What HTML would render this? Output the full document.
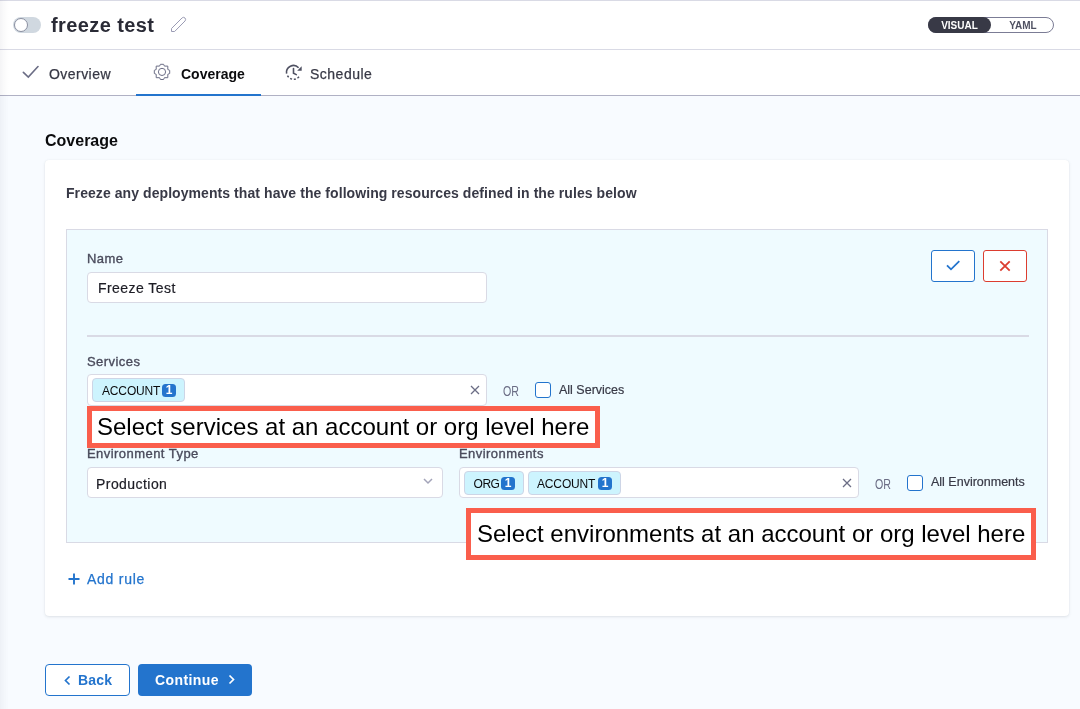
<!DOCTYPE html>
<html><head><meta charset="utf-8">
<style>
*{box-sizing:border-box;margin:0;padding:0}
html,body{width:1080px;height:709px;overflow:hidden;background:#f8fbff;font-family:"Liberation Sans",sans-serif;color:#22222a}
.abs{position:absolute}
#top{position:absolute;left:0;top:0;width:1080px;height:96px;background:#fff}
#topline{position:absolute;left:0;top:0;width:1080px;height:1px;background:#d9dae5}
#hdrline{position:absolute;left:0;top:49px;width:1080px;height:1px;background:#d9dae5}
#tabline{position:absolute;left:0;top:95px;width:1080px;height:1px;background:#b0b1c4}
#leftshade{position:absolute;left:0;top:0;width:10px;height:709px;background:linear-gradient(to right,rgba(0,0,40,0.045) 0,rgba(0,0,40,0.025) 3px,rgba(0,0,40,0) 9px)}
.toggle{position:absolute;left:13px;top:17px;width:28px;height:16px;border-radius:8px;background:#d0d8e0}
.toggle .knob{position:absolute;left:1px;top:1px;width:14px;height:14px;border-radius:50%;background:#fff;border:1px solid #8a8fa0}
.title{position:absolute;left:51px;top:13px;font-size:20px;font-weight:bold;color:#2a2b36;line-height:24px;letter-spacing:0.4px}
.vy{position:absolute;left:928px;top:17px;width:126px;height:16px;border:1px solid #7b7c95;border-radius:8px;background:#fff}
.vy .v{position:absolute;left:-1px;top:-1px;width:63px;height:16px;border-radius:8px;background:#383946;color:#fff;font-size:10px;font-weight:bold;text-align:center;line-height:18px}
.vy .y{position:absolute;left:62px;top:-1px;width:64px;height:16px;color:#4f5162;font-size:10px;font-weight:bold;text-align:center;line-height:18px}
.tab{position:absolute;top:65px;font-size:14px;line-height:18px;color:#383946;-webkit-text-stroke:0.25px #383946}
.underline{position:absolute;left:136px;top:94px;width:125px;height:2px;background:#2374cd}
.h2{position:absolute;left:45px;top:131px;font-size:16px;font-weight:bold;line-height:20px;color:#0b0b0d}
#card{position:absolute;left:45px;top:160px;width:1024px;height:456px;background:#fff;border-radius:4px;box-shadow:0 0 1px rgba(40,41,61,0.08),0 1px 3px rgba(96,97,112,0.16)}
.desc{position:absolute;left:66px;top:184px;font-size:14px;font-weight:bold;line-height:18px;color:#383946;letter-spacing:0.07px}
#panel{position:absolute;left:66px;top:229px;width:982px;height:314px;background:#effbff;border:1px solid #d9dae5}
.lbl{position:absolute;font-size:13px;line-height:16px;color:#4a4b5c;letter-spacing:0.45px;-webkit-text-stroke:0.35px #4a4b5c}
.inp{position:absolute;background:#fff;border:1px solid #d9dae5;border-radius:4px;height:31px}
.txt{position:absolute;font-size:14px;line-height:18px;color:#1d1d25;letter-spacing:0.44px;-webkit-text-stroke:0.2px #1d1d25}
.ibtn{position:absolute;top:250px;width:44px;height:32px;background:#fff;border-radius:3px}
.divider{position:absolute;left:87px;top:335px;width:942px;height:2px;background:#d9dae5}
.tag{position:absolute;height:24px;background:#cdf4fe;border:1px solid #cdd5e6;border-radius:4px;font-size:12px;line-height:24px;color:#0b0b0d}
.badge{display:inline-block;position:absolute;top:5px;width:14px;height:13px;background:#2374cd;color:#fff;border-radius:3.5px;font-size:12px;font-weight:bold;line-height:13px;text-align:center}
.or{position:absolute;font-size:14px;color:#6b6d85;line-height:16px;transform:scaleX(0.76);transform-origin:left}
.cb{position:absolute;width:16px;height:16px;border:1.5px solid #2374cd;border-radius:3px;background:#fff}
.red{position:absolute;border:5px solid #fa5e4c;background:#fff;color:#000;font-size:24px;line-height:28px;white-space:nowrap}
.addrule{position:absolute;left:67px;top:570px;font-size:14px;line-height:18px;color:#2374cd;letter-spacing:0.75px;-webkit-text-stroke:0.25px #2374cd}
.btn{position:absolute;top:664px;height:32px;border-radius:4px;font-size:14px;font-weight:bold;line-height:30px}
</style></head><body><div id="root" style="position:absolute;left:0;top:0;width:1080px;height:709px;will-change:transform">
<div id="top"></div>
<div id="topline"></div>
<div id="hdrline"></div>
<div id="tabline"></div>
<div class="toggle"><div class="knob"></div></div>
<div class="title">freeze test</div>
<svg class="abs" style="left:170px;top:16px" width="17" height="17" viewBox="0 0 17 17"><path d="M1.5 15.5 L1.5 12.5 L12.2 1.8 Q13.6 0.7 15 2 Q16.2 3.4 15.1 4.9 L4.6 15.5 Z" fill="none" stroke="#9a9bb4" stroke-width="1"/></svg>
<div class="vy"><div class="v">VISUAL</div><div class="y">YAML</div></div>

<svg class="abs" style="left:22px;top:65px" width="17" height="14" viewBox="0 0 17 14"><path d="M1.4 7.4 L6.3 12 L16 1.5" fill="none" stroke="#6b6d85" stroke-width="1.6" stroke-linecap="round"/></svg>
<div class="tab" style="left:49px;letter-spacing:0.45px">Overview</div>
<svg class="abs" style="left:153px;top:63px" width="18" height="18" viewBox="0 0 18 18"><circle cx="9" cy="8.9" r="3.6" fill="none" stroke="#6b6d85" stroke-width="1"/><path d="M7.4 1.3 H10.6 L11.4 3.1 H14.8 V6.5 L16.7 7.3 V10.5 L14.8 11.3 V14.7 H11.4 L10.6 16.5 H7.4 L6.6 14.7 H3.2 V11.3 L1.3 10.5 V7.3 L3.2 6.5 V3.1 H6.6 Z" fill="none" stroke="#6b6d85" stroke-width="1" stroke-linejoin="round"/></svg>
<div class="tab" style="left:181px;font-weight:bold;color:#0b0b0d;-webkit-text-stroke:0">Coverage</div>
<svg class="abs" style="left:284px;top:62px" width="20" height="20" viewBox="0 0 20 20"><path d="M2.6 11.7 A7 7 0 0 1 14.6 5.7" fill="none" stroke="#4f5162" stroke-width="1.6"/><path d="M17.7 4.2 L17.7 8.7 L13.2 8.7 Z" fill="#4f5162"/><path d="M3.5 13.6 A7 7 0 0 0 16 13.2" fill="none" stroke="#4f5162" stroke-width="1.5" stroke-dasharray="2 1.8"/><path d="M9.5 6.5 V11.2 L12.3 12.6" fill="none" stroke="#4f5162" stroke-width="1.6" stroke-linecap="round"/></svg>
<div class="tab" style="left:310px;letter-spacing:0.5px">Schedule</div>
<div class="underline"></div>

<div class="h2">Coverage</div>
<div id="card"></div>
<div class="desc">Freeze any deployments that have the following resources defined in the rules below</div>
<div id="panel"></div>

<div class="lbl" style="left:87px;top:251px">Name</div>
<div class="inp" style="left:87px;top:272px;width:400px"></div>
<div class="txt" style="left:98px;top:279px">Freeze Test</div>

<div class="ibtn" style="left:931px;border:1px solid #2374cd"><svg class="abs" style="left:14px;top:9px" width="16" height="12" viewBox="0 0 16 12"><path d="M1 5.3 L5 9.3 L13.3 1.2" fill="none" stroke="#2374cd" stroke-width="1.8"/></svg></div>
<div class="ibtn" style="left:983px;border:1px solid #dc3d2f"><svg class="abs" style="left:15px;top:9px" width="12" height="12" viewBox="0 0 12 12"><path d="M1.3 1.3 L10.7 10.7 M10.7 1.3 L1.3 10.7" fill="none" stroke="#dc3d2f" stroke-width="1.8"/></svg></div>

<div class="divider"></div>

<div class="lbl" style="left:87px;top:354px">Services</div>
<div class="inp" style="left:87px;top:374px;width:400px;height:32px"></div>
<div class="tag" style="left:92px;top:378px;width:93px"><span style="position:absolute;left:9px;letter-spacing:-0.15px">ACCOUNT</span><span class="badge" style="left:69px">1</span></div>
<svg class="abs" style="left:470px;top:385px" width="10" height="10" viewBox="0 0 10 10"><path d="M1 1 L9 9 M9 1 L1 9" stroke="#6b6d85" stroke-width="1.3"/></svg>
<div class="or" style="left:503px;top:383px">OR</div>
<div class="cb" style="left:535px;top:382px"></div>
<div class="lbl" style="left:559px;top:382px;font-size:12.5px;letter-spacing:0;color:#383946;-webkit-text-stroke:0.2px #383946">All Services</div>

<div class="lbl" style="left:87px;top:446px">Environment Type</div>
<div class="inp" style="left:87px;top:467px;width:356px"></div>
<div class="txt" style="left:96px;top:475px">Production</div>
<svg class="abs" style="left:423px;top:478px" width="10" height="7" viewBox="0 0 10 7"><path d="M1 1 L5 5 L9 1" fill="none" stroke="#a3a4b9" stroke-width="1.5"/></svg>

<div class="lbl" style="left:459px;top:446px">Environments</div>
<div class="inp" style="left:459px;top:467px;width:400px"></div>
<div class="tag" style="left:464px;top:471px;width:60px"><span style="position:absolute;left:8.5px;letter-spacing:-0.45px">ORG</span><span class="badge" style="left:36px">1</span></div>
<div class="tag" style="left:528px;top:471px;width:93px"><span style="position:absolute;left:8px;letter-spacing:-0.15px">ACCOUNT</span><span class="badge" style="left:69px">1</span></div>
<svg class="abs" style="left:842px;top:478px" width="10" height="10" viewBox="0 0 10 10"><path d="M1 1 L9 9 M9 1 L1 9" stroke="#6b6d85" stroke-width="1.3"/></svg>
<div class="or" style="left:875px;top:476px">OR</div>
<div class="cb" style="left:907px;top:475px"></div>
<div class="lbl" style="left:931px;top:474px;font-size:12.5px;letter-spacing:0;color:#383946;-webkit-text-stroke:0.2px #383946">All Environments</div>

<div class="red" style="left:87px;top:406px;width:513px;height:42px;padding-left:5px;padding-top:2px">Select services at an account or org level here</div>
<div class="red" style="left:466px;top:508px;width:570px;height:52px;padding-left:6px;padding-top:7px">Select environments at an account or org level here</div>

<svg class="abs" style="left:68px;top:573px" width="12" height="12" viewBox="0 0 12 12"><path d="M6 0.5 V11.5 M0.5 6 H11.5" stroke="#2374cd" stroke-width="1.9"/></svg>
<div class="addrule" style="left:87px">Add rule</div>

<div class="btn" style="left:45px;width:85px;background:#fff;border:1px solid #2374cd;color:#2374cd"><svg class="abs" style="left:18px;top:10px" width="7" height="11" viewBox="0 0 7 11"><path d="M5.5 1.5 L1.5 5.5 L5.5 9.5" fill="none" stroke="#2374cd" stroke-width="1.7"/></svg><span style="position:absolute;left:32px;letter-spacing:0.2px">Back</span></div>
<div class="btn" style="left:138px;width:114px;background:#2374cd;color:#fff"><span style="position:absolute;left:17px;top:1px;letter-spacing:0.4px">Continue</span><svg class="abs" style="left:90px;top:10px" width="7" height="11" viewBox="0 0 7 11"><path d="M1.5 1.5 L5.5 5.5 L1.5 9.5" fill="none" stroke="#fff" stroke-width="1.7"/></svg></div>
<div id="leftshade"></div>
</div></body></html>
